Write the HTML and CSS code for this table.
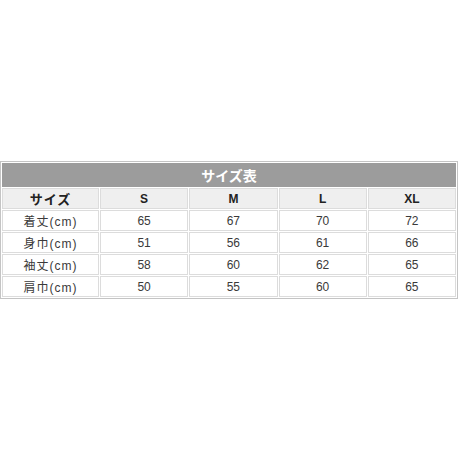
FILE: index.html
```html
<!DOCTYPE html>
<html lang="ja">
<head>
<meta charset="utf-8">
<link rel="stylesheet" href="styles.css">
</head>
<body>
<div class="page">
<table class="size">
<colgroup><col class="col1"><col class="colx"><col class="colx"><col class="colx"><col class="colx"></colgroup>
<thead>
<tr><th colspan="5" class="title">サイズ表</th></tr>
<tr class="head"><th class="c1">サイズ</th><th>S</th><th>M</th><th>L</th><th>XL</th></tr>
</thead>
<tbody>
<tr><td class="c1">着丈(cm)</td><td>65</td><td>67</td><td>70</td><td>72</td></tr>
<tr><td class="c1">身巾(cm)</td><td>51</td><td>56</td><td>61</td><td>66</td></tr>
<tr><td class="c1">袖丈(cm)</td><td>58</td><td>60</td><td>62</td><td>65</td></tr>
<tr><td class="c1">肩巾(cm)</td><td>50</td><td>55</td><td>60</td><td>65</td></tr>
</tbody>
</table>
</div>
</body>
</html>
```
FILE: styles.css
```css
html, body { margin: 0; padding: 0; background: #fff; }
.page { padding-top: 161px; }
.size {
  width: 458px;
  border: 1px solid #c4c4c4;
  border-spacing: 1px;
  font-family: "Liberation Sans", "Noto Sans CJK JP", sans-serif;
  font-size: 12px;
  color: #3a3a3a;
  table-layout: fixed;
}
.col1 { width: 97px; }
.size th, .size td {
  border: 1px solid #dcdcdc;
  text-align: center;
  padding: 0;
  height: 19px;
}
.size td.c1 { letter-spacing: 1px; }
.size .title {
  background: #9c9c9c;
  color: #fff;
  font-weight: bold;
  font-size: 14px;
  height: 22px;
  border-color: #9c9c9c;
}
.head th {
  background: #efefef;
  color: #222;
  font-weight: bold;
  font-size: 12px;
}
.head th.c1 { font-size: 13px; letter-spacing: 1px; }
```
